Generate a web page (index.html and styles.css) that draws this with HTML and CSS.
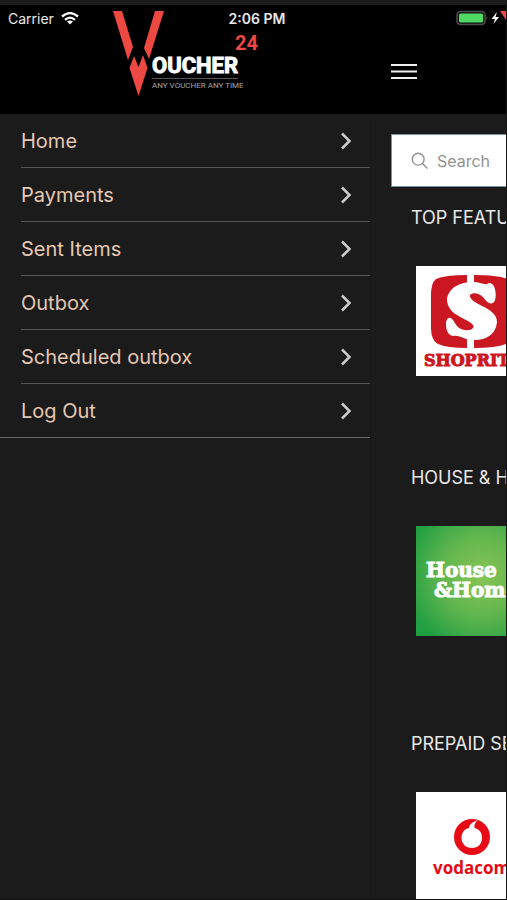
FILE: index.html
```html
<!DOCTYPE html>
<html lang="en">
<head>
<meta charset="utf-8">
<meta name="viewport" content="width=device-width, initial-scale=1">
<title>Voucher 24</title>
<link rel="stylesheet" href="styles.css">
</head>
<body>
<div class="screen">
  <header class="header">
    <div class="header-drawer">
      <svg class="logo" viewBox="0 0 150 92" role="img" aria-label="Voucher 24">
        <g fill="#ee4842">
          <path d="M0 0H9L20 36L15 49Z"/>
          <path d="M42 0H51L36 48L31 37Z"/>
          <path d="M21 45L25.500 56L30 44L34.500 57L25.500 85L16.500 57Z"/>
          <text class="logo-number" x="122" y="39">24</text>
        </g>
        <text class="logo-word" x="39" y="62">OUCHER</text>
        <path d="M39 67.500H125" stroke="#555" stroke-width="1"/>
        <text class="logo-tag" x="39" y="77">ANY VOUCHER ANY TIME</text>
      </svg>
    </div>
    <div class="header-main">
      <button class="menu-button" type="button" aria-label="Menu">
        <svg width="26" height="18" viewBox="0 0 26 18"><path d="M0 2H26M0 8.500H26M0 15H26" stroke="#eee" stroke-width="2.200"/></svg>
      </button>
    </div>
    <div class="status">
      <span class="carrier">Carrier
        <svg width="18" height="13" viewBox="0 0 18 13" fill="none" stroke="#fff" stroke-width="2.300"><path d="M1 4.500Q9-2.300 17 4.500M4 7.800Q9 3.400 14 7.800"/><path d="M9 12.500L6 9.600Q9 7.300 12 9.600Z" fill="#fff" stroke="none"/></svg>
      </span>
      <span class="time">2:06 PM</span>
      <span class="battery">
        <svg width="50" height="16" viewBox="0 0 50 16"><rect x="1" y="1.500" width="28" height="13" rx="3.500" fill="#111" stroke="#4b4b4d" stroke-width="1.600"/><rect x="3" y="3.500" width="24" height="9" rx="1.500" fill="#4fd964"/><path d="M30.500 6Q32.500 8 30.500 10Z" fill="#4b4b4d"/><path d="M41 2L35.500 9H39L37.500 14L43 7H39.500Z" fill="#fff"/><path d="M44 1H50V10Z" fill="#ee4842"/></svg>
      </span>
    </div>
  </header>
  <div class="body">
    <nav class="drawer">
      <ul class="menu">
        <li><a href="#home">Home<svg class="chevron" viewBox="0 0 12 18"><path d="M2 1.500L9.500 9L2 16.500"/></svg></a></li>
        <li><a href="#payments">Payments<svg class="chevron" viewBox="0 0 12 18"><path d="M2 1.500L9.500 9L2 16.500"/></svg></a></li>
        <li><a href="#sent">Sent Items<svg class="chevron" viewBox="0 0 12 18"><path d="M2 1.500L9.500 9L2 16.500"/></svg></a></li>
        <li><a href="#outbox">Outbox<svg class="chevron" viewBox="0 0 12 18"><path d="M2 1.500L9.500 9L2 16.500"/></svg></a></li>
        <li><a href="#scheduled">Scheduled outbox<svg class="chevron" viewBox="0 0 12 18"><path d="M2 1.500L9.500 9L2 16.500"/></svg></a></li>
        <li><a href="#logout">Log Out<svg class="chevron" viewBox="0 0 12 18"><path d="M2 1.500L9.500 9L2 16.500"/></svg></a></li>
      </ul>
    </nav>
    <main class="main">
      <label class="search">
        <svg width="18" height="18" viewBox="0 0 18 18" fill="none" stroke="#929292" stroke-width="1.400"><circle cx="7.200" cy="7.200" r="5.900"/><path d="M11.500 11.500L16.500 16.500"/></svg>
        <input type="search" placeholder="Search" aria-label="Search">
      </label>
      <section class="section">
        <h2>TOP FEATURED</h2>
        <a class="card" href="#shoprite">
          <svg viewBox="0 0 110 110" role="img" aria-label="Shoprite">
            <rect width="110" height="110" fill="#fff"/>
            <path d="M51 9Q29 9 20 13Q15 17 15 29V62Q15 74 22 78Q31 82 51 82V73H58V82Q80 82 90 78Q97 74 97 62V29Q97 17 91 13Q83 9 58 9V18H51Z" fill="#cb1722"/>
            <path d="M76 18C80 20 81 33 78 36C74 40 70 35 67 31C63 27 57 26 54 29C53 33 60 37 66 40C75 44 81 49 81 56C80 69 69 75 56 74C48 74 44 69 38 70C32 70 30 64 30 58C30 53 33 49 37 54C40 59 42 63 49 64C55 65 59 62 57 59C53 54 46 53 41 49C34 45 31 39 31 33C33 21 45 16 57 16C64 16 68 19 71 18Q74 16 76 18Z" fill="#fff"/>
            <text class="shoprite-name" x="8" y="100">SHOPRITE</text>
          </svg>
        </a>
      </section>
      <section class="section section-spaced">
        <h2>HOUSE &amp; HOME</h2>
        <a class="card" href="#house-home">
          <svg viewBox="0 0 110 110" role="img" aria-label="House &amp; Home">
            <defs><radialGradient id="green" cx="60%" cy="45%" r="72%"><stop offset="0" stop-color="#88c455"/><stop offset=".5" stop-color="#62b64e"/><stop offset="1" stop-color="#1f9e42"/></radialGradient></defs>
            <rect width="110" height="110" fill="url(#green)"/>
            <text class="house-name" x="10" y="51">House</text>
            <text class="house-name" x="18" y="71">&amp;Home</text>
          </svg>
        </a>
      </section>
      <section class="section">
        <h2>PREPAID SERVICES</h2>
        <a class="card" href="#vodacom">
          <svg viewBox="0 0 110 110" role="img" aria-label="Vodacom">
            <rect width="110" height="110" fill="#fff"/>
            <circle cx="56" cy="45" r="18" fill="#e60b14"/>
            <path d="M62 28C56 30 53 33 53 36C48 37 45.500 41 45.500 46C45.500 52 50 56 56 56C62 56 66 52 66 46C66 40 63 37 58.500 36C58 33 59 30 62 28Z" fill="#fff"/>
            <text class="vodacom-name" x="17" y="82">vodacom</text>
          </svg>
        </a>
      </section>
    </main>
  </div>
</div>
</body>
</html>
```
FILE: styles.css
```css
* {
  box-sizing: border-box;
}

body {
  margin: 0;
  background: #1b1b1b;
  color: #e8e8e8;
  font-family: Inter, "Liberation Sans", sans-serif;
}

.screen {
  display: flex;
  flex-direction: column;
  height: 100vh;
  overflow: hidden;
  padding-top: 5px;
  border-right: 1px solid #151515;
  border-bottom: 1px solid #101010;
}

.header {
  position: relative;
  display: flex;
  flex: none;
  height: 109px;
  background: #000;
}

.header-drawer,
.drawer {
  flex: none;
  width: 73.3%;
}

.header-drawer {
  display: flex;
  justify-content: center;
  padding: 6px 0 0 6px;
}

.logo {
  width: 150px;
  height: 92px;
}

.logo text {
  font-family: Roboto, "Liberation Sans", sans-serif;
  font-weight: 700;
}

.logo .logo-number {
  font-size: 20px;
}

.logo .logo-word {
  fill: #fff;
  stroke: #fff;
  stroke-width: 1;
  font-size: 22px;
}

.logo .logo-tag {
  fill: #a5a5a5;
  font-size: 8px;
  font-weight: 400;
}

.header-main {
  flex: 1;
  display: flex;
  align-items: center;
  padding: 24px 0 0 20px;
}

.menu-button {
  display: flex;
  padding: 0;
  border: 0;
  background: none;
}

.status {
  position: absolute;
  inset: 0 0 auto;
  display: grid;
  grid-template-columns: 1fr auto 1fr;
  align-items: center;
  height: 26px;
  padding: 0 0 0 8px;
  font-size: 14px;
}

.carrier {
  display: flex;
  align-items: center;
  gap: 7px;
}

.time {
  font-weight: 600;
}

.battery {
  display: flex;
  justify-content: flex-end;
}

.body {
  flex: 1;
  display: flex;
  min-height: 0;
}

.drawer {
  border-right: 1px solid #181818;
}

.menu {
  margin: 0;
  padding: 0;
  list-style: none;
  border-bottom: 1px solid #666;
}

.menu li {
  padding-left: 21px;
}

.menu a {
  display: flex;
  align-items: center;
  justify-content: space-between;
  height: 54px;
  padding-right: 18px;
  border-bottom: 1px solid #555;
  color: #e5c8b2;
  font-size: 20px;
  text-decoration: none;
}

.menu li:last-child a {
  height: 53px;
  border-bottom: 0;
}

.chevron {
  width: 12px;
  height: 18px;
  fill: none;
  stroke: #ccc;
  stroke-width: 2.5;
}

.main {
  flex: 1;
  min-width: 0;
  overflow: hidden;
  padding: 20px 0 0 20px;
}

.search {
  display: flex;
  align-items: center;
  gap: 8px;
  height: 53px;
  margin-bottom: 19px;
  padding-left: 19px;
  border: 1px solid #7893a5;
  border-right: 0;
  background: #fff;
}

.search svg {
  flex: none;
}

.search input {
  flex: 1;
  min-width: 0;
  padding: 0;
  border: 0;
  outline: 0;
  background: none;
  color: #333;
  font: inherit;
  font-size: 16px;
}

.search input::placeholder {
  color: #929292;
  opacity: 1;
}

.section {
  padding: 0 0 90px 20px;
}

.section-spaced {
  padding-bottom: 96px;
}

.section h2 {
  margin: 0 0 36px;
  font-size: 18px;
  font-weight: 400;
  line-height: 24px;
  white-space: nowrap;
}

.card {
  display: block;
  width: 110px;
  height: 110px;
  margin-left: 5px;
}

.card svg {
  display: block;
  width: 110px;
  height: 110px;
}

.shoprite-name {
  fill: #cb1722;
  stroke: #cb1722;
  stroke-width: 1;
  font: 700 16px "DejaVu Serif", serif;
}

.house-name {
  fill: #fff;
  stroke: #fff;
  stroke-width: 1;
  font: 700 20px "DejaVu Serif", serif;
}

.vodacom-name {
  fill: #e60b14;
  font: 700 17px "Open Sans", sans-serif;
}
```
